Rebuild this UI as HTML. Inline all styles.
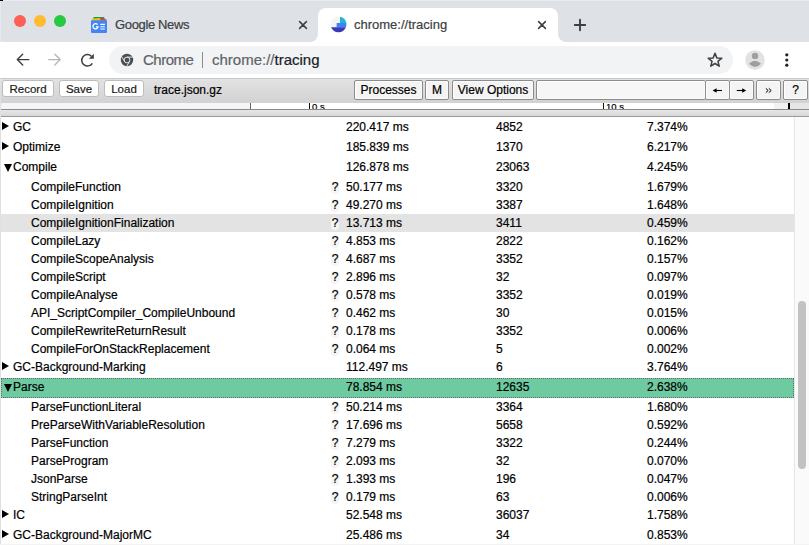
<!DOCTYPE html>
<html><head><meta charset="utf-8">
<style>
*{box-sizing:border-box;margin:0;padding:0}
html,body{width:809px;height:545px;overflow:hidden;background:#fff;font-family:"Liberation Sans",sans-serif;color:#000;-webkit-text-stroke:0.2px}
.abs{position:absolute}
#tabstrip{left:0;top:0;width:809px;height:42px;background:#dee1e6}
.light{position:absolute;width:12px;height:12px;border-radius:50%;top:15px}
#tab{left:318px;top:8px;width:240px;height:34px;background:#fff;border-radius:8px 8px 0 0}
.foot{position:absolute;width:8px;height:8px;background:#fff;top:34px}
.foot:after{content:"";position:absolute;width:16px;height:16px;border-radius:50%;background:#dee1e6;top:-8px}
.foot.l:after{left:-8px}
.foot.r:after{left:0}
#toolbar{left:0;top:42px;width:809px;height:36px;background:#fff}
#omni{left:109px;top:46px;width:624px;height:28px;border-radius:14px;background:#f1f3f4}
.ttext{position:absolute;font-size:13px;color:#3c4043;white-space:nowrap}
#tt{left:0;top:78px;width:809px;height:25px;background:linear-gradient(#e2e2e2,#d2d2d2);border-top:1px solid #c8c8c8}
.rb{position:absolute;top:80px;height:17px;background:#fff;border:1px solid #bdbdbd;border-radius:3px;font-size:11.5px;text-align:center;line-height:17px;color:#1a1a1a}
.sb{position:absolute;top:80px;height:20px;background:#f4f4f4;box-shadow:inset 1px 1px 0 #fff,inset -1px -1px 0 #fafafa;border-radius:2px;border:1px solid #8c8c8c;font-size:12px;text-align:center;line-height:18px;color:#000}
#ruler{left:1px;top:103px;width:808px;height:7px;background:#fff;border-bottom:1px solid #8a8a8a;overflow:hidden}
.rl{top:-1px;font-size:9.5px;line-height:10px;color:#000}
#band{left:1px;top:110px;width:808px;height:7px;background:linear-gradient(#e6e6e6,#d8d8d8);border-bottom:1px solid #9a9a9a}
#lborder{left:0;top:78px;width:1px;height:467px;background:#e0e0e0}
#table{left:1px;top:118px;width:793px}
.row{position:relative;height:18px;font-size:12px;white-space:nowrap}
.row.top{height:20px}
.row span{position:absolute;top:2px;line-height:14px}
.row.top span{top:2px}
.c1{left:30px}
.row.top .c1{left:12px}
.tri{left:1px}
.q{left:330px;width:8px;text-align:center;background:#f4f4f4;border-radius:4px;top:2.5px !important;height:13px;line-height:13px !important}
.c2{left:345px}
.c3{left:495px}
.c4{left:646px}
.tri{position:absolute;width:0;height:0;border-style:solid}
.tri.rt{left:1px;top:4px;border-width:4px 0 4px 7px;border-color:transparent transparent transparent #000}
.tri.dn{left:2.5px;top:6px;border-width:8px 4.5px 0 4.5px;border-color:#000 transparent transparent transparent}
.row.top .c1{left:12px}
.row.hl{background:#e3e3e3}
.row.sel{background:#6ecaa0;outline:1px dotted #6a6a6a;outline-offset:-1px}
#scroll{left:794px;top:117px;width:15px;height:428px;background:#fafafa;border-left:1px solid #e6e6e6}
#thumb{left:798px;top:301px;width:8px;height:168px;border-radius:4px;background:#c2c2c2}
</style></head><body>
<div id="tabstrip" class="abs"></div>
<div class="abs" style="left:0;top:0;width:809px;height:1px;background:#e9eaed"></div>
<div class="abs" style="left:0;top:0;width:3px;height:1px;background:#000"></div>
<div class="abs" style="left:0;top:1px;width:1px;height:41px;background:#e6e8eb"></div>
<div class="light" style="left:14px;background:#fe5f57"></div>
<div class="light" style="left:34px;background:#febc2e"></div>
<div class="light" style="left:54px;background:#28c840"></div>
<div id="tab" class="abs"></div>
<div class="foot l" style="left:310px"></div>
<div class="foot r" style="left:558px"></div>
<div class="ttext" style="left:115px;top:17px;letter-spacing:-0.35px">Google News</div>
<div class="ttext" style="left:354px;top:17px">chrome://tracing</div>
<div id="toolbar" class="abs"></div>
<div id="omni" class="abs"></div>
<div class="ttext" style="left:143px;top:50.5px;font-size:15px;letter-spacing:-0.5px;color:#5f6368">Chrome</div>
<div class="abs" style="left:202px;top:52px;width:1px;height:16px;background:#8a8d91"></div>
<div class="ttext" style="left:212px;top:50.5px;font-size:15px;color:#5f6368">chrome://<span style="color:#202124">tracing</span></div>

<svg class="abs" style="left:0;top:0" width="809" height="545" viewBox="0 0 809 545">
<!-- google news favicon -->
<path d="M93.5 17 h10.8 v3 h-10.8z" fill="#0f9d58"/>
<path d="M92 18.6 L100.4 18 L101 20.5 L92 20.5z" fill="#fbbc04"/>
<path d="M100 18 L106 19 L106.5 20.8 L100.5 20.8z" fill="#ea4335"/>
<rect x="91" y="20.3" width="16" height="12.6" rx="0.8" fill="#4285f4"/>
<path d="M97.6 24.6 A2.6 2.6 0 1 0 98.1 26.9 H95.9" fill="none" stroke="#fff" stroke-width="1.3"/>
<path d="M100.3 24.4h4.6M100.3 26.7h4.6M100.3 29h4.6" stroke="#fff" stroke-width="1.1"/>
<!-- tracing favicon -->
<circle cx="338.5" cy="24.5" r="8" fill="#f5f5f6"/>
<path d="M340 16.64 A8 8 0 0 1 346.36 23 H340z" fill="#22b5d5"/>
<path d="M336.6 23 H346.36 A8 8 0 0 1 345.9 27.2 H336.6z" fill="#3d84f2"/>
<path d="M331.1 27.2 H345.9 A8 8 0 0 1 331.1 27.2z" fill="#3a3ab5"/>
<!-- close x -->
<path d="M299.6 21.6 L306.4 28.4 M306.4 21.6 L299.6 28.4" stroke="#3c4043" stroke-width="1.5" stroke-linecap="round"/>
<path d="M538.6 21.6 L545.4 28.4 M545.4 21.6 L538.6 28.4" stroke="#3c4043" stroke-width="1.5" stroke-linecap="round"/>
<!-- plus -->
<path d="M574.8 25 H585.2 M580 19.8 V30.2" stroke="#3c4043" stroke-width="1.9" stroke-linecap="round"/>
<!-- back / fwd -->
<path d="M28.8 59.6 H17.4 M22.7 54.2 L17.3 59.6 L22.7 65" fill="none" stroke="#3c4043" stroke-width="1.4" stroke-linecap="round" stroke-linejoin="round"/>
<path d="M48.7 59.6 H60.1 M54.8 54.2 L60.2 59.6 L54.8 65" fill="none" stroke="#b4b7bb" stroke-width="1.4" stroke-linecap="round" stroke-linejoin="round"/>
<!-- reload -->
<path d="M91.3 56.1 A5.7 5.7 0 1 0 92.3 63.3" fill="none" stroke="#3c4043" stroke-width="1.5"/>
<path d="M93.8 53.8 V58.7 H88.9z" fill="#3c4043"/>
<!-- chrome icon -->
<circle cx="127" cy="60" r="6.2" fill="#4a4d52"/>
<circle cx="127" cy="60" r="2.9" fill="none" stroke="#f1f3f4" stroke-width="0.9"/>
<path d="M127 57.1 H132.6 M124.5 61.45 L121.7 56.6 M129.5 61.45 L126.7 66.3" stroke="#f1f3f4" stroke-width="0.9"/>
<!-- star -->
<path d="M715.00 53.20 L716.82 57.89 L721.85 58.18 L717.95 61.36 L719.23 66.22 L715.00 63.50 L710.77 66.22 L712.05 61.36 L708.15 58.18 L713.18 57.89z" fill="none" stroke="#3c4043" stroke-width="1.5" stroke-linejoin="round"/>
<!-- avatar -->
<circle cx="755" cy="60" r="9.8" fill="#e2e2e2"/>
<circle cx="755" cy="55.9" r="3.2" fill="#9f9f9f"/>
<path d="M749 63.8 Q755 57.6 761 63.8 Q755 70 749 63.8z" fill="#9f9f9f"/>
<!-- dots -->
<circle cx="786.8" cy="54.8" r="1.6" fill="#202124"/>
<circle cx="786.8" cy="60" r="1.6" fill="#202124"/>
<circle cx="786.8" cy="65.2" r="1.6" fill="#202124"/>
</svg>
<div id="tt" class="abs"></div>
<div class="rb" style="left:2px;width:52px">Record</div>
<div class="rb" style="left:59px;width:40px">Save</div>
<div class="rb" style="left:104px;width:40px">Load</div>
<div class="abs" style="left:154px;top:83px;font-size:12px">trace.json.gz</div>
<div class="sb" style="left:354px;width:69px">Processes</div>
<div class="sb" style="left:425px;width:24px">M</div>
<div class="sb" style="left:452px;width:82px">View Options</div>
<div class="sb" style="left:536px;width:170px;background:#f6f6f6"></div>
<div class="sb" style="left:705px;width:25px"></div>
<div class="sb" style="left:729px;width:25px"></div>
<div class="sb" style="left:756px;width:25px"></div>
<div class="sb" style="left:783px;width:25px">?</div>
<svg class="abs" style="left:0;top:0" width="809" height="545" viewBox="0 0 809 545">
<path d="M715 90.5 H722" stroke="#000" stroke-width="1.1"/>
<path d="M712.6 90.5 L716.6 88.2 L716.6 92.8z" fill="#000"/>
<path d="M736.8 90.5 H743.8" stroke="#000" stroke-width="1.1"/>
<path d="M746.2 90.5 L742.2 88.2 L742.2 92.8z" fill="#000"/>
<path d="M765.8 88.4 L768.2 90.5 L765.8 92.6 M768.8 88.4 L771.2 90.5 L768.8 92.6" fill="none" stroke="#000" stroke-width="1"/>
</svg>
<div id="ruler" class="abs">
<div class="abs" style="left:0;top:0;width:249px;height:6px;background:#f3f5f8"></div>
<div class="abs" style="left:249px;top:0;width:1px;height:7px;background:#666"></div>
<div class="abs" style="left:308px;top:0;width:1px;height:7px;background:#111"></div>
<div class="abs rl" style="left:311px">0 s</div>
<div class="abs" style="left:602px;top:0;width:1px;height:7px;background:#111"></div>
<div class="abs rl" style="left:605px">10 s</div>
<div class="abs" style="left:773px;top:0;width:15px;height:6px;background:#f2f2f2"></div>
<div class="abs" style="left:787px;top:0;width:2px;height:7px;background:#000"></div>
<div class="abs" style="left:789px;top:0;width:19px;height:7px;background:#e6e6e6"></div>
</div>
<div id="band" class="abs"></div>

<div id="table" class="abs">
<div class="row top"><i class="tri rt"></i><span class="c1">GC</span><span class="c2">220.417 ms</span><span class="c3">4852</span><span class="c4">7.374%</span></div>
<div class="row top"><i class="tri rt"></i><span class="c1">Optimize</span><span class="c2">185.839 ms</span><span class="c3">1370</span><span class="c4">6.217%</span></div>
<div class="row top"><i class="tri dn"></i><span class="c1">Compile</span><span class="c2">126.878 ms</span><span class="c3">23063</span><span class="c4">4.245%</span></div>
<div class="row"><span class="c1">CompileFunction</span><span class="q">?</span><span class="c2">50.177 ms</span><span class="c3">3320</span><span class="c4">1.679%</span></div>
<div class="row"><span class="c1">CompileIgnition</span><span class="q">?</span><span class="c2">49.270 ms</span><span class="c3">3387</span><span class="c4">1.648%</span></div>
<div class="row hl"><span class="c1">CompileIgnitionFinalization</span><span class="q">?</span><span class="c2">13.713 ms</span><span class="c3">3411</span><span class="c4">0.459%</span></div>
<div class="row"><span class="c1">CompileLazy</span><span class="q">?</span><span class="c2">4.853 ms</span><span class="c3">2822</span><span class="c4">0.162%</span></div>
<div class="row"><span class="c1">CompileScopeAnalysis</span><span class="q">?</span><span class="c2">4.687 ms</span><span class="c3">3352</span><span class="c4">0.157%</span></div>
<div class="row"><span class="c1">CompileScript</span><span class="q">?</span><span class="c2">2.896 ms</span><span class="c3">32</span><span class="c4">0.097%</span></div>
<div class="row"><span class="c1">CompileAnalyse</span><span class="q">?</span><span class="c2">0.578 ms</span><span class="c3">3352</span><span class="c4">0.019%</span></div>
<div class="row"><span class="c1">API_ScriptCompiler_CompileUnbound</span><span class="q">?</span><span class="c2">0.462 ms</span><span class="c3">30</span><span class="c4">0.015%</span></div>
<div class="row"><span class="c1">CompileRewriteReturnResult</span><span class="q">?</span><span class="c2">0.178 ms</span><span class="c3">3352</span><span class="c4">0.006%</span></div>
<div class="row"><span class="c1">CompileForOnStackReplacement</span><span class="q">?</span><span class="c2">0.064 ms</span><span class="c3">5</span><span class="c4">0.002%</span></div>
<div class="row top"><i class="tri rt"></i><span class="c1">GC-Background-Marking</span><span class="c2">112.497 ms</span><span class="c3">6</span><span class="c4">3.764%</span></div>
<div class="row top sel"><i class="tri dn"></i><span class="c1">Parse</span><span class="c2">78.854 ms</span><span class="c3">12635</span><span class="c4">2.638%</span></div>
<div class="row"><span class="c1">ParseFunctionLiteral</span><span class="q">?</span><span class="c2">50.214 ms</span><span class="c3">3364</span><span class="c4">1.680%</span></div>
<div class="row"><span class="c1">PreParseWithVariableResolution</span><span class="q">?</span><span class="c2">17.696 ms</span><span class="c3">5658</span><span class="c4">0.592%</span></div>
<div class="row"><span class="c1">ParseFunction</span><span class="q">?</span><span class="c2">7.279 ms</span><span class="c3">3322</span><span class="c4">0.244%</span></div>
<div class="row"><span class="c1">ParseProgram</span><span class="q">?</span><span class="c2">2.093 ms</span><span class="c3">32</span><span class="c4">0.070%</span></div>
<div class="row"><span class="c1">JsonParse</span><span class="q">?</span><span class="c2">1.393 ms</span><span class="c3">196</span><span class="c4">0.047%</span></div>
<div class="row"><span class="c1">StringParseInt</span><span class="q">?</span><span class="c2">0.179 ms</span><span class="c3">63</span><span class="c4">0.006%</span></div>
<div class="row top"><i class="tri rt"></i><span class="c1">IC</span><span class="c2">52.548 ms</span><span class="c3">36037</span><span class="c4">1.758%</span></div>
<div class="row top"><i class="tri rt"></i><span class="c1">GC-Background-MajorMC</span><span class="c2">25.486 ms</span><span class="c3">34</span><span class="c4">0.853%</span></div>
</div>
<div id="scroll" class="abs"></div>
<div id="lborder" class="abs"></div>
<div id="thumb" class="abs"></div>
<div class="abs" style="left:0;top:544px;width:809px;height:1px;background:#f3f3f3"></div>
</body></html>
